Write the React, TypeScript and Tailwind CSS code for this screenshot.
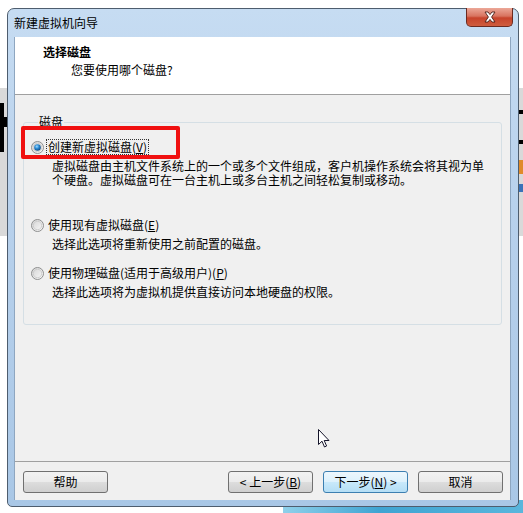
import React from "react";

const Radio = ({ checked }: { checked?: boolean }) => (
  <svg width="13" height="13" viewBox="0 0 13 13" className="shrink-0">
    <defs>
      <linearGradient id="rg" x1="0" y1="0" x2="1" y2="1">
        <stop offset="0" stopColor="#d2d2d2" />
        <stop offset="1" stopColor="#fbfbfb" />
      </linearGradient>
      <radialGradient id="dot" cx="0.4" cy="0.35" r="0.7">
        <stop offset="0" stopColor="#9fdcff" />
        <stop offset="0.45" stopColor="#2a8ad4" />
        <stop offset="1" stopColor="#0b3f73" />
      </radialGradient>
    </defs>
    <circle cx="6.5" cy="6.5" r="6" fill="url(#rg)" stroke="#8e8f8f" />
    <circle cx="6.5" cy="6.5" r="4.2" fill="none" stroke="#c8c8c8" strokeWidth="0.8" />
    {checked && <circle cx="6.5" cy="6.5" r="3.3" fill="url(#dot)" />}
  </svg>
);

const Btn = ({ children, primary }: { children: React.ReactNode; primary?: boolean }) => (
  <div
    className={
      primary
        ? "w-[85px] h-[22px] rounded-[3px] border border-[#3c7fb1] bg-[linear-gradient(#edf7fd_0%,#ddf1fc_50%,#c9e9fb_50%,#b4def6_100%)] flex items-center justify-center leading-[16px]"
        : "w-[85px] h-[22px] rounded-[3px] border border-[#707070] bg-[linear-gradient(#f2f2f2_0%,#ebebeb_50%,#dddddd_50%,#cfcfcf_100%)] flex items-center justify-center leading-[16px]"
    }
  >
    {children}
  </div>
);

export default function App() {
  return (
    <div className="relative w-[523px] h-[513px] bg-white overflow-hidden text-[12px] text-black font-['Noto_Sans_CJK_SC','Noto_Sans',sans-serif]">
      {/* desktop behind the window */}
      <div className="absolute left-0 top-[88px] w-[10px] h-[148px] bg-[#d9d9d9]" />
      <div className="absolute left-0 top-[103px] w-[4px] h-[49px] bg-black" />
      <div className="absolute left-0 top-[117px] w-[9px] h-[10px] bg-black" />
      <div className="absolute right-0 top-[88px] w-[10px] h-[148px] bg-[#d9d9d9]" />
      <div className="absolute right-0 top-[110px] w-[6px] h-[4px] bg-black" />
      <div className="absolute right-0 top-[140px] w-[6px] h-[4px] bg-black" />
      <div className="absolute right-0 top-[160px] w-[4px] h-[14px] bg-[#e08a2a]" />
      <div className="absolute right-0 top-[184px] w-[4px] h-[8px] bg-[#3a72b8]" />
      <div className="absolute left-[283px] top-[500px] w-[240px] h-[13px] bg-[linear-gradient(to_right,#8fd0ea,#3fa4d2_40%,#5ab6dc)]" />

      {/* window */}
      <div className="absolute left-[7px] top-[8px] w-[512px] h-[499px] rounded-t-[7px] rounded-b-[5px] border border-[#4e5d6e] bg-[linear-gradient(to_bottom,#c6dcf2,#b8d1ec_40%,#a9c7e6)] flex flex-col">
        <div className="relative h-[28px] shrink-0 flex items-center pl-[6px] leading-[16px] pb-[1px]">
          新建虚拟机向导
          <div className="absolute left-[458px] -top-[1px] w-[47px] h-[19px] rounded-b-[5px] border border-[#6b2a20] border-t-0 bg-[linear-gradient(#eca898_0%,#d8735f_45%,#c7432b_55%,#cf5d3e_100%)] flex items-center justify-center">
            <svg width="14" height="12" viewBox="0 0 14 12">
              <path
                d="M2 1 L5 1 L7 3.6 L9 1 L12 1 L8.6 6 L12 11 L9 11 L7 8.4 L5 11 L2 11 L5.4 6 Z"
                fill="#ffffff"
                stroke="#4a1e16"
                strokeWidth="0.9"
              />
            </svg>
          </div>
        </div>

        <div className="ml-[6px] w-[497px] h-[463px] flex flex-col bg-[#f0f0f0] border-x border-[#8ea6c0]">
          <div className="h-[58px] shrink-0 bg-white border-b border-[#a0a0a0] pt-[7px] pl-[28px] leading-[16px]">
            <div className="font-bold">选择磁盘</div>
            <div className="pl-[28px] mt-[2px]">您要使用哪个磁盘?</div>
          </div>

          <div className="flex-1 pl-[8px]">
            <fieldset className="mt-[19px] w-[479px] h-[211px] border border-[#d5dfe5] rounded-[3px] px-[7px]">
              <legend className="ml-[7px] px-[1px] leading-[16px]">磁盘</legend>

              <div className="mt-[9px] flex items-center h-[16px]">
                <Radio checked />
                <span className="ml-[3px] px-[1px] leading-[14px] outline outline-1 outline-dotted outline-[#333]">
                  创建新虚拟磁盘(<span className="underline">V</span>)
                </span>
              </div>
              <p className="mt-[4px] pl-[21px] leading-[14px]">
                虚拟磁盘由主机文件系统上的一个或多个文件组成，客户机操作系统会将其视为单
                <br />
                个硬盘。虚拟磁盘可在一台主机上或多台主机之间轻松复制或移动。
              </p>

              <div className="mt-[30px] flex items-center h-[16px]">
                <Radio />
                <span className="ml-[4px] leading-[16px]">
                  使用现有虚拟磁盘(<span className="underline">E</span>)
                </span>
              </div>
              <p className="mt-[4px] pl-[21px] leading-[14px]">选择此选项将重新使用之前配置的磁盘。</p>

              <div className="mt-[14px] flex items-center h-[16px]">
                <Radio />
                <span className="ml-[4px] leading-[16px]">
                  使用物理磁盘(适用于高级用户)(<span className="underline">P</span>)
                </span>
              </div>
              <p className="mt-[4px] pl-[21px] leading-[14px]">选择此选项将为虚拟机提供直接访问本地硬盘的权限。</p>
            </fieldset>
          </div>

          <div className="shrink-0 border-t border-[#a0a0a0] h-[39px] flex items-center pl-[8px] pr-[7px] pt-[1px]">
            <Btn>帮助</Btn>
            <div className="ml-auto flex gap-[10px]">
              <Btn>
                &lt; 上一步(<span className="underline">B</span>)
              </Btn>
              <Btn primary>
                下一步(<span className="underline">N</span>) &gt;
              </Btn>
              <Btn>取消</Btn>
            </div>
          </div>
        </div>
      </div>

      {/* annotation */}
      <div className="absolute left-[21px] top-[126px] w-[159px] h-[33px] border-[4px] border-[#f01010] rounded-[2px]" />

      {/* mouse cursor */}
      <svg className="absolute left-[318px] top-[429px]" width="12" height="19" viewBox="0 0 12 19">
        <path
          d="M0.5 0.5 L0.5 15.5 L4 12.2 L6.5 18 L8.6 17 L6.2 11.5 L11 11.5 Z"
          fill="#ffffff"
          stroke="#14142a"
          strokeWidth="1"
          strokeLinejoin="miter"
        />
      </svg>
    </div>
  );
}
